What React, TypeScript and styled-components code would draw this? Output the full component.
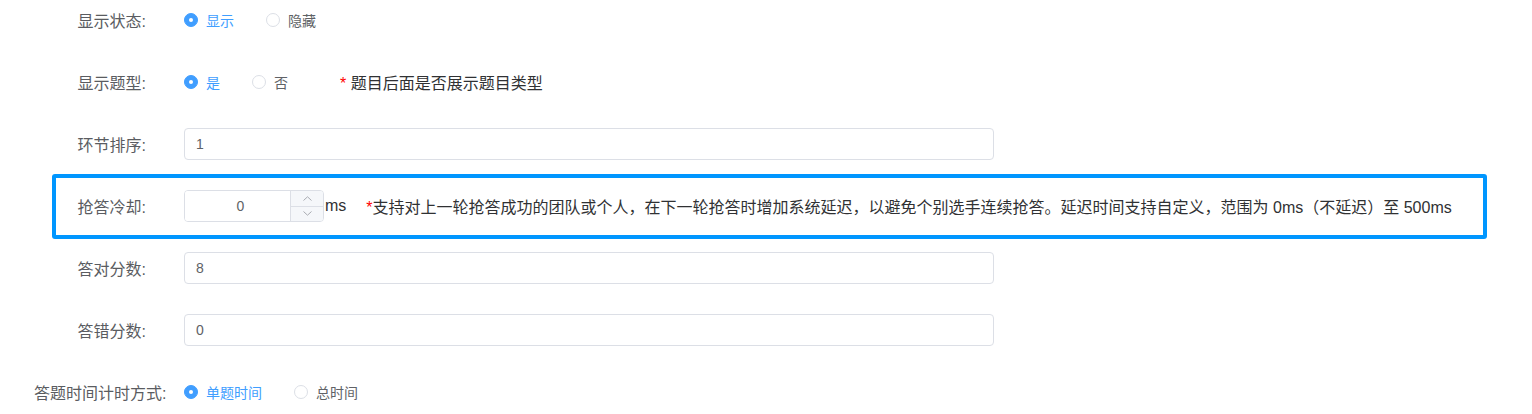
import React from 'react'
import styled, { createGlobalStyle, css } from 'styled-components'

const GlobalStyle = createGlobalStyle`
    body {
        margin: 0;
        background: #fff;
        font-family: "Liberation Sans", "Noto Sans CJK SC", sans-serif;
    }
`

const Form = styled.div`
    padding: 4px 0 0 34px;
    width: 1532px;
    box-sizing: border-box;
`

const FormItem = styled.div<{ $highlight?: boolean }>`
    position: relative;
    display: flex;
    align-items: center;
    height: 32px;
    margin-bottom: 30px;

    &:last-child {
        margin-bottom: 0;
    }

    ${p => p.$highlight && css`
        &::after {
            content: '';
            position: absolute;
            left: 18px;
            top: -16px;
            width: 1435px;
            height: 65px;
            box-sizing: border-box;
            border: 4px solid #0096ff;
            border-radius: 3px;
            pointer-events: none;
        }
    `}
`

const Label = styled.label`
    flex-shrink: 0;
    width: 150px;
    box-sizing: border-box;
    padding-right: 38px;
    text-align: right;
    white-space: nowrap;
    font-size: 16px;
    color: #5a5c61;
`

const Content = styled.div`
    display: flex;
    align-items: center;
`

const RadioGroup = styled.div`
    display: flex;
    align-items: center;
`

const Radio = styled.label<{ $checked?: boolean }>`
    display: flex;
    align-items: center;
    margin-right: 32px;
    font-size: 14px;
    color: ${p => (p.$checked ? '#409eff' : '#606266')};
    cursor: pointer;

    .dot {
        width: 14px;
        height: 14px;
        box-sizing: border-box;
        border-radius: 50%;
        border: 1px solid ${p => (p.$checked ? '#409eff' : '#dcdfe6')};
        background: ${p => (p.$checked ? '#409eff' : '#fff')};
        display: flex;
        align-items: center;
        justify-content: center;
        margin-right: 8px;

        &::after {
            content: '';
            width: 4px;
            height: 4px;
            border-radius: 50%;
            background: #fff;
            display: ${p => (p.$checked ? 'block' : 'none')};
        }
    }
`

const TextInput = styled.input`
    width: 810px;
    height: 32px;
    box-sizing: border-box;
    border: 1px solid #dcdfe6;
    border-radius: 4px;
    padding: 0 11px;
    font-family: inherit;
    font-size: 14px;
    color: #606266;
    outline: none;
`

const NumberBox = styled.div`
    display: flex;
    width: 140px;
    height: 32px;
    box-sizing: border-box;
    border: 1px solid #dcdfe6;
    border-radius: 4px;
    overflow: hidden;

    input {
        flex: 1;
        min-width: 0;
        border: none;
        outline: none;
        text-align: center;
        font-family: inherit;
        font-size: 14px;
        color: #606266;
        padding: 0 0 0 6px;
    }
`

const Spinner = styled.div`
    width: 32px;
    display: flex;
    flex-direction: column;
    border-left: 1px solid #dcdfe6;
    background: #f5f7fa;

    span {
        flex: 1;
        display: flex;
        align-items: center;
        justify-content: center;
    }

    span + span {
        border-top: 1px solid #dcdfe6;
    }
`

const Unit = styled.span`
    margin-left: 1px;
    font-size: 16px;
    color: #303133;
`

const Hint = styled.span<{ $gap: number }>`
    margin-left: ${p => p.$gap}px;
    font-size: 16px;
    color: #303133;
    white-space: nowrap;

    b {
        font-weight: normal;
        color: #f00;
    }
`

const Chevron = ({ up }: { up?: boolean }) => (
    <svg width="9" height="5" viewBox="0 0 9 5">
        <path
            d={up ? 'M0.5 4.5L4.5 0.8L8.5 4.5' : 'M0.5 0.5L4.5 4.2L8.5 0.5'}
            fill="none"
            stroke="#a8abb2"
            strokeWidth="1"
        />
    </svg>
)

type Opt = { text: string; checked?: boolean }

const Radios = ({ options }: { options: Opt[] }) => (
    <RadioGroup>
        {options.map(o => (
            <Radio key={o.text} $checked={o.checked}>
                <span className="dot" />
                {o.text}
            </Radio>
        ))}
    </RadioGroup>
)

export default function App() {
    return (
        <>
            <GlobalStyle />
            <Form>
                <FormItem>
                    <Label>显示状态:</Label>
                    <Content>
                        <Radios options={[{ text: '显示', checked: true }, { text: '隐藏' }]} />
                    </Content>
                </FormItem>

                <FormItem>
                    <Label>显示题型:</Label>
                    <Content>
                        <Radios options={[{ text: '是', checked: true }, { text: '否' }]} />
                        <Hint $gap={20}><b>*</b> 题目后面是否展示题目类型</Hint>
                    </Content>
                </FormItem>

                <FormItem>
                    <Label>环节排序:</Label>
                    <Content>
                        <TextInput defaultValue="1" />
                    </Content>
                </FormItem>

                <FormItem $highlight>
                    <Label>抢答冷却:</Label>
                    <Content>
                        <NumberBox>
                            <input defaultValue="0" />
                            <Spinner>
                                <span><Chevron up /></span>
                                <span><Chevron /></span>
                            </Spinner>
                        </NumberBox>
                        <Unit>ms</Unit>
                        <Hint $gap={20}>
                            <b>*</b>支持对上一轮抢答成功的团队或个人，在下一轮抢答时增加系统延迟，以避免个别选手连续抢答。延迟时间支持自定义，范围为 0ms（不延迟）至 500ms
                        </Hint>
                    </Content>
                </FormItem>

                <FormItem>
                    <Label>答对分数:</Label>
                    <Content>
                        <TextInput defaultValue="8" />
                    </Content>
                </FormItem>

                <FormItem>
                    <Label>答错分数:</Label>
                    <Content>
                        <TextInput defaultValue="0" />
                    </Content>
                </FormItem>

                <FormItem>
                    <Label>答题时间计时方式:</Label>
                    <Content>
                        <Radios options={[{ text: '单题时间', checked: true }, { text: '总时间' }]} />
                    </Content>
                </FormItem>
            </Form>
        </>
    )
}
